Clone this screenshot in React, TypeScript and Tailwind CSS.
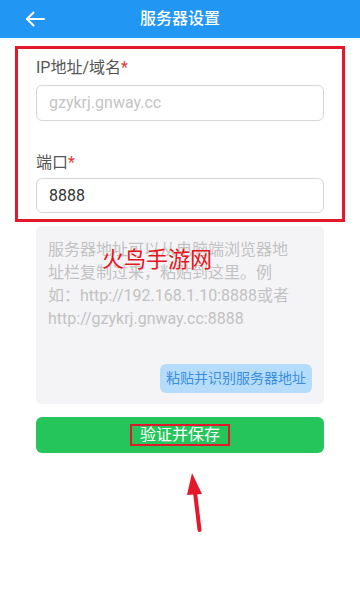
import type { ReactElement } from "react";

const font = { fontFamily: 'Roboto, "Noto Sans CJK SC", sans-serif' };

function BackArrow(): ReactElement {
  return (
    <svg width="20" height="16" viewBox="0 0 20 16" fill="none" stroke="white" strokeWidth="2" strokeLinecap="round" strokeLinejoin="round">
      <path d="M19 8H2" />
      <path d="M8.5 1.5L2 8l6.5 6.5" />
    </svg>
  );
}

export default function App(): ReactElement {
  return (
    <div className="relative h-[612px] w-[360px] overflow-hidden bg-white" style={font}>
      <header className="flex h-[38px] items-center bg-[#2196f3] px-[25px]">
        <BackArrow />
        <h1 className="flex-1 pr-[20px] text-center text-[16px] font-medium text-white">服务器设置</h1>
      </header>
      <div className="h-[2px] bg-[#eefbfd]" />

      <div className="mx-[15px] mt-[6px] border-[3px] border-[#e3192b] px-[18px] pb-[6px] pt-[7px]">
        <label className="block text-[16px] leading-[24px] text-[#555]">
          IP地址/域名<span className="text-[#e53935]">*</span>
        </label>
        <div className="mt-[5px] flex h-[36px] items-center rounded-[6px] border border-[#d6d6d6] px-[12px] text-[16px] text-[#c4c4c4]">
          gzykrj.gnway.cc
        </div>
        <label className="mt-[30px] block text-[16px] leading-[24px] text-[#555]">
          端口<span className="text-[#e53935]">*</span>
        </label>
        <div className="mt-[3px] flex h-[35px] items-center rounded-[6px] border border-[#d6d6d6] px-[12px] text-[16px] text-[#333]">
          8888
        </div>
      </div>

      <div className="relative mx-[36px] mt-[4px] flex h-[178px] flex-col rounded-[6px] bg-[#f4f4f6] pl-[12px] pr-[24px] pt-[12px]">
        <p className="text-[16px] leading-[23px] text-[#c2c2c2]">
          服务器地址可以从电脑端浏览器地址栏复制过来，粘贴到这里。例如：http://192.168.1.10:8888或者http://gzykrj.gnway.cc:8888
        </p>
        <span className="absolute left-[66px] top-[20px] text-[22px] leading-[28px] text-[#e8141c]">火鸟手游网</span>
        <div className="-mr-[12px] mt-auto mb-[11px] flex justify-end">
          <button type="button" className="h-[29px] rounded-[6px] bg-[#b6dcfb] px-[6px] text-[14px] text-[#3b8fdc]">
            粘贴并识别服务器地址
          </button>
        </div>
      </div>

      <button
        type="button"
        className="mx-[36px] mt-[13px] flex h-[36px] w-[288px] items-center justify-center rounded-[6px] bg-[#26c55c]"
      >
        <span className="border-[2px] border-[#e3192b] px-[8px] text-[16px] leading-[18px] text-white">验证并保存</span>
      </button>

      <svg className="absolute left-[180px] top-[468px]" width="30" height="66" viewBox="0 0 30 66">
        <path d="M12 5L22 26L7 27Z" fill="#e3192b" />
        <path d="M15 24L19.5 62" stroke="#e3192b" strokeWidth="4" strokeLinecap="round" />
      </svg>
    </div>
  );
}
